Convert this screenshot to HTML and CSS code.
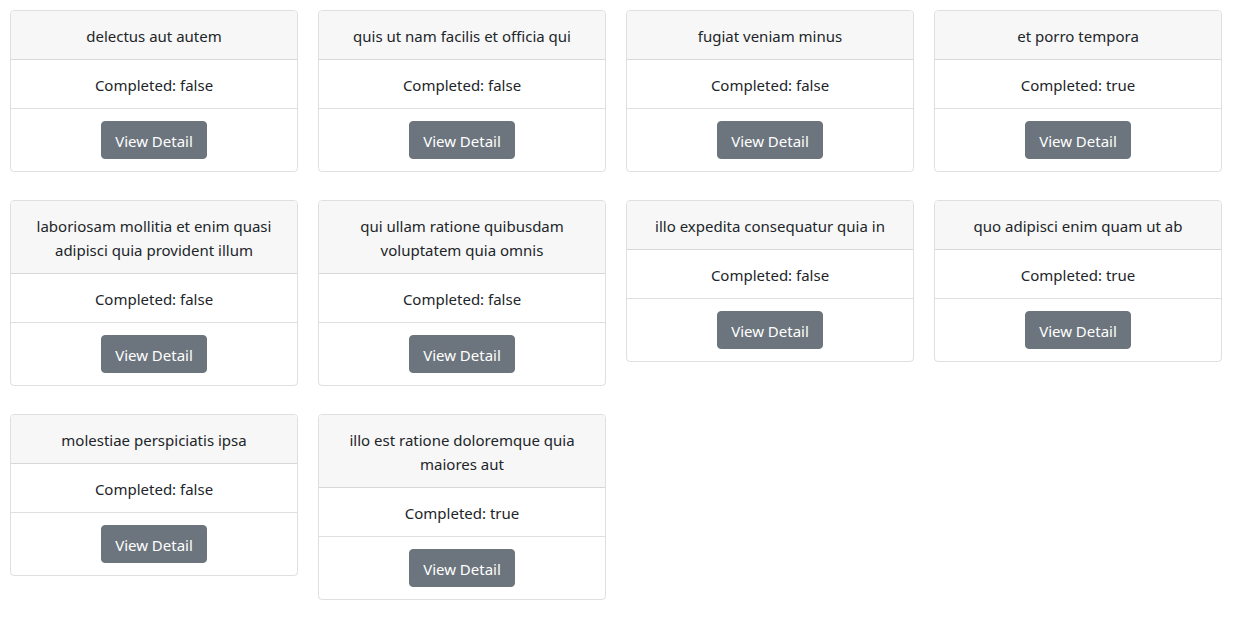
FILE: index.html
```html
<!DOCTYPE html>
<html>
<head>
<meta charset="utf-8">
<link rel="stylesheet" href="styles.css">
</head>
<body>
<div class="grid">
  <div class="card"><div class="card-header">delectus aut autem</div><div class="card-row">Completed: false</div><div class="card-footer"><button class="btn">View Detail</button></div></div>
  <div class="card"><div class="card-header">quis ut nam facilis et officia qui</div><div class="card-row">Completed: false</div><div class="card-footer"><button class="btn">View Detail</button></div></div>
  <div class="card"><div class="card-header">fugiat veniam minus</div><div class="card-row">Completed: false</div><div class="card-footer"><button class="btn">View Detail</button></div></div>
  <div class="card"><div class="card-header">et porro tempora</div><div class="card-row">Completed: true</div><div class="card-footer"><button class="btn">View Detail</button></div></div>
  <div class="card"><div class="card-header">laboriosam mollitia et enim quasi adipisci quia provident illum</div><div class="card-row">Completed: false</div><div class="card-footer"><button class="btn">View Detail</button></div></div>
  <div class="card"><div class="card-header">qui ullam ratione quibusdam voluptatem quia omnis</div><div class="card-row">Completed: false</div><div class="card-footer"><button class="btn">View Detail</button></div></div>
  <div class="card"><div class="card-header">illo expedita consequatur quia in</div><div class="card-row">Completed: false</div><div class="card-footer"><button class="btn">View Detail</button></div></div>
  <div class="card"><div class="card-header">quo adipisci enim quam ut ab</div><div class="card-row">Completed: true</div><div class="card-footer"><button class="btn">View Detail</button></div></div>
  <div class="card"><div class="card-header">molestiae perspiciatis ipsa</div><div class="card-row">Completed: false</div><div class="card-footer"><button class="btn">View Detail</button></div></div>
  <div class="card"><div class="card-header">illo est ratione doloremque quia maiores aut</div><div class="card-row">Completed: true</div><div class="card-footer"><button class="btn">View Detail</button></div></div>
</div>
</body>
</html>
```
FILE: styles.css
```css
html, body {
  margin: 0;
  padding: 0;
  background: #fff;
}
body {
  font-family: "Noto Sans", "Open Sans", sans-serif;
  font-size: 15px;
  line-height: 24px;
  color: #212529;
}
.grid {
  display: grid;
  grid-template-columns: repeat(4, 288px);
  column-gap: 20px;
  row-gap: 28px;
  align-items: start;
  padding: 10px;
}
.card {
  border: 1px solid rgba(0,0,0,.125);
  border-radius: 4px;
  text-align: center;
  overflow: hidden;
}
.card-header {
  background: #f7f7f7;
  padding: 13px 20px 11px;
  border-bottom: 1px solid rgba(0,0,0,.125);
}
.card-row {
  padding: 13px 20px 11px;
  border-bottom: 1px solid rgba(0,0,0,.125);
}
.card-footer {
  padding: 12px 20px;
}
.btn {
  font-family: inherit;
  font-size: 15px;
  line-height: 24px;
  height: 38px;
  width: 106px;
  padding: 2px 0 0;
  border: 1px solid #6c757d;
  border-radius: 4px;
  background: #6c757d;
  color: #fff;
  display: block;
  margin: 0 auto;
}
```
